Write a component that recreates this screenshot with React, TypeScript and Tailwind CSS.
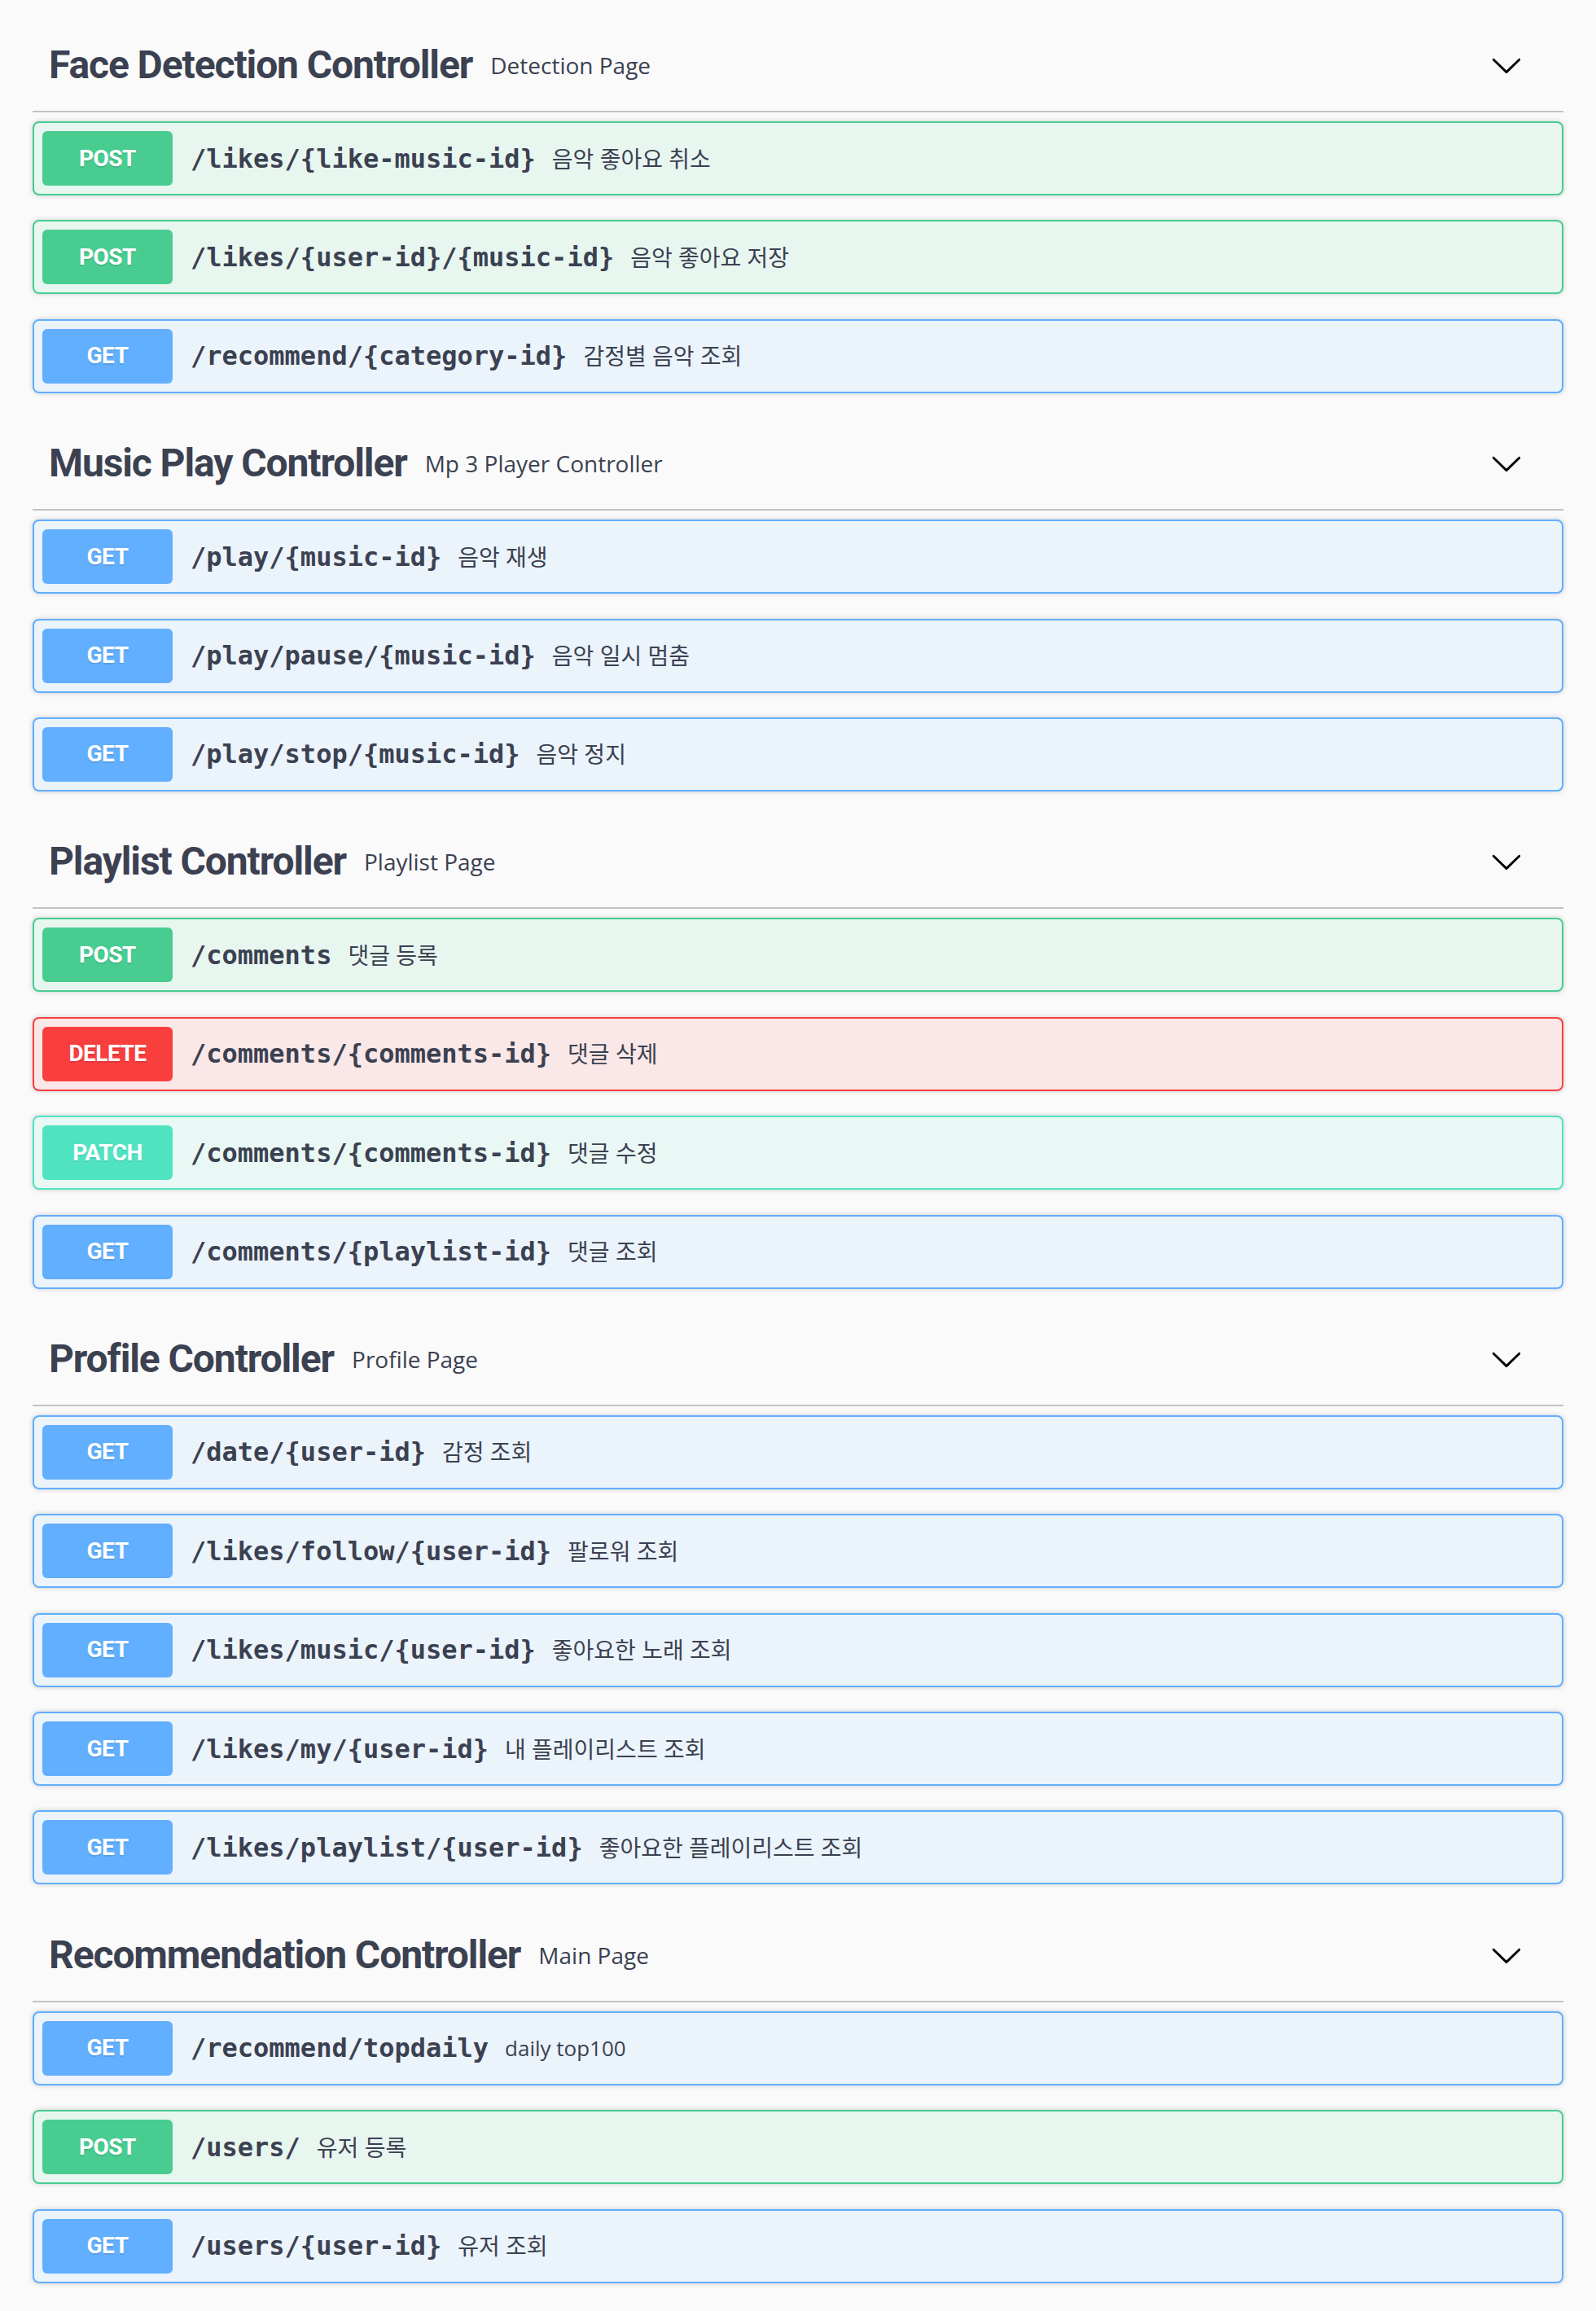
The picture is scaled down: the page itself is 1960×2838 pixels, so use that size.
import React from "react"

type Method = "GET" | "POST" | "DELETE" | "PATCH"

type Op = { method: Method; path: string; desc: string }

type Tag = { name: string; sub: string; ops: Op[] }

const tags: Tag[] = [
    {
        name: "Face Detection Controller",
        sub: "Detection Page",
        ops: [
            { method: "POST", path: "/likes/{like-music-id}", desc: "음악 좋아요 취소" },
            { method: "POST", path: "/likes/{user-id}/{music-id}", desc: "음악 좋아요 저장" },
            { method: "GET", path: "/recommend/{category-id}", desc: "감정별 음악 조회" },
        ],
    },
    {
        name: "Music Play Controller",
        sub: "Mp 3 Player Controller",
        ops: [
            { method: "GET", path: "/play/{music-id}", desc: "음악 재생" },
            { method: "GET", path: "/play/pause/{music-id}", desc: "음악 일시 멈춤" },
            { method: "GET", path: "/play/stop/{music-id}", desc: "음악 정지" },
        ],
    },
    {
        name: "Playlist Controller",
        sub: "Playlist Page",
        ops: [
            { method: "POST", path: "/comments", desc: "댓글 등록" },
            { method: "DELETE", path: "/comments/{comments-id}", desc: "댓글 삭제" },
            { method: "PATCH", path: "/comments/{comments-id}", desc: "댓글 수정" },
            { method: "GET", path: "/comments/{playlist-id}", desc: "댓글 조회" },
        ],
    },
    {
        name: "Profile Controller",
        sub: "Profile Page",
        ops: [
            { method: "GET", path: "/date/{user-id}", desc: "감정 조회" },
            { method: "GET", path: "/likes/follow/{user-id}", desc: "팔로워 조회" },
            { method: "GET", path: "/likes/music/{user-id}", desc: "좋아요한 노래 조회" },
            { method: "GET", path: "/likes/my/{user-id}", desc: "내 플레이리스트 조회" },
            { method: "GET", path: "/likes/playlist/{user-id}", desc: "좋아요한 플레이리스트 조회" },
        ],
    },
    {
        name: "Recommendation Controller",
        sub: "Main Page",
        ops: [
            { method: "GET", path: "/recommend/topdaily", desc: "daily top100" },
            { method: "POST", path: "/users/", desc: "유저 등록" },
            { method: "GET", path: "/users/{user-id}", desc: "유저 조회" },
        ],
    },
]

const styles: Record<Method, { block: string; badge: string }> = {
    GET: { block: "bg-[#ebf3fb] border-[#61affe]", badge: "bg-[#61affe]" },
    POST: { block: "bg-[#e8f6f0] border-[#49cc90]", badge: "bg-[#49cc90]" },
    DELETE: { block: "bg-[#fae7e7] border-[#f93e3e]", badge: "bg-[#f93e3e]" },
    PATCH: { block: "bg-[#e9f8f4] border-[#50e3c2]", badge: "bg-[#50e3c2]" },
}

// hangul descriptions render a bit wider in the original
const isKorean = (s: string) => /[\uac00-\ud7a3]/.test(s)

const Chevron = () => (
    <svg width="40" height="40" viewBox="0 0 20 20" aria-hidden="true">
        <path
            fill="#000"
            d="M17.418 6.109c.272-.268.709-.268.979 0s.271.701 0 .969l-7.908 7.83c-.27.268-.707.268-.979 0l-7.908-7.83c-.27-.268-.27-.701 0-.969.271-.268.709-.268.979 0L10 13.25l7.418-7.141z"
        />
    </svg>
)

const Operation = ({ op }: { op: Op }) => {
    const s = styles[op.method]
    return <div className={`flex items-center h-[91px] mb-[30.4px] px-[10px] border-2 rounded-[8px] shadow-[0_0_6px_rgba(0,0,0,0.19)] ${s.block}`}>
        <div className={`flex items-center justify-center w-[160px] h-[67px] rounded-[6px] text-white text-[28px] font-bold tracking-[-0.5px] [text-shadow:0_2px_0_rgba(0,0,0,0.1)] font-['Roboto',sans-serif] ${s.badge}`}>
            {op.method}
        </div>
        <span className="pl-[22px] pr-[20px] text-[32px] font-bold text-[#3b4151] font-['DejaVu_Sans_Mono',monospace]">{op.path}</span>
        <span className={`${isKorean(op.desc) ? "text-[28px]" : "text-[26px]"} text-[#3b4151] font-['Open_Sans','Noto_Sans_CJK_KR',sans-serif]`}>{op.desc}</span>
    </div>
}

const TagSection = ({ tag }: { tag: Tag }) => {
    return <div>
        <div className="flex items-center h-[114px] mb-[11px] pl-[20px] pr-[40px] border-b-2 border-[rgba(59,65,81,0.3)] text-[#3b4151]">
            <span className="text-[48px] font-bold tracking-[-1.1px] font-['Roboto',sans-serif]">{tag.name}</span>
            <span className="flex-1 px-[22px] text-[28px] font-['Open_Sans',sans-serif]">{tag.sub}</span>
            <button className="px-[10px]">
                <Chevron />
            </button>
        </div>
        {tag.ops.map((op, i) => <Operation key={i} op={op} />)}
    </div>
}

export default function App() {
    return <div className="min-h-screen bg-[#fafafa] px-[40px] pt-[24px]">
        {tags.map(t => <TagSection key={t.name} tag={t} />)}
    </div>
}
